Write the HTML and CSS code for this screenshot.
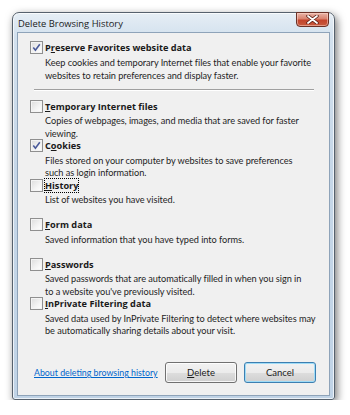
FILE: index.html
```html
<!DOCTYPE html>
<html lang="en">
<head>
    <meta charset="UTF-8">
    <meta name="viewport" content="width=device-width, initial-scale=1.0">
    <title>Delete Browsing History</title>
    <link rel="stylesheet" href="styles.css">
</head>
<body>
    <div class="window">
        <div class="titlebar">
            <span class="title">Delete Browsing History</span>
            <button class="close-btn" aria-label="Close">
                <svg width="13" height="9" viewBox="0 0 13 9">
                    <path d="M2 1 L11 8 M11 1 L2 8" stroke="#5a1d14" stroke-width="3.4" stroke-linecap="round"/>
                    <path d="M2 1 L11 8 M11 1 L2 8" stroke="#ffffff" stroke-width="1.8" stroke-linecap="round"/>
                </svg>
            </button>
        </div>

        <div class="client">
            <div class="option first">
                <label class="option-label"><span class="check checked"></span><span>P<u>r</u>eserve Favorites website data</span></label>
                <p class="desc">Keep cookies and temporary Internet files that enable your favorite<br>websites to retain preferences and display faster.</p>
            </div>

            <div class="separator"></div>

            <div class="option">
                <label class="option-label"><span class="check"></span><span><u>T</u>emporary Internet files</span></label>
                <p class="desc">Copies of webpages, images, and media that are saved for faster<br>viewing.</p>
            </div>

            <div class="option">
                <label class="option-label"><span class="check checked"></span><span>C<u>o</u>okies</span></label>
                <p class="desc">Files stored on your computer by websites to save preferences<br>such as login information.</p>
            </div>

            <div class="option">
                <label class="option-label"><span class="check"></span><span class="focus"><u>H</u>istory</span></label>
                <p class="desc">List of websites you have visited.</p>
            </div>

            <div class="option">
                <label class="option-label"><span class="check"></span><span><u>F</u>orm data</span></label>
                <p class="desc">Saved information that you have typed into forms.</p>
            </div>

            <div class="option">
                <label class="option-label"><span class="check"></span><span><u>P</u>asswords</span></label>
                <p class="desc">Saved passwords that are automatically filled in when you sign in<br>to a website you've previously visited.</p>
            </div>

            <div class="option">
                <label class="option-label"><span class="check"></span><span><u>I</u>nPrivate Filtering data</span></label>
                <p class="desc">Saved data used by InPrivate Filtering to detect where websites may<br>be automatically sharing details about your visit.</p>
            </div>

            <div class="footer">
                <a href="#" class="help-link">About deleting browsing history</a>
                <div class="buttons">
                    <button class="btn"><u>D</u>elete</button>
                    <button class="btn default">Cancel</button>
                </div>
            </div>
        </div>
    </div>
</body>
</html>
```

FILE: styles.css
```css
body {
    margin: 0;
    padding: 0;
    background-color: #ffffff;
    font-family: Lato, "Open Sans", sans-serif;
    font-size: 9.2px;
    color: #000000;
}

.window {
    box-sizing: border-box;
    width: 323px;
    height: 388px;
    margin: 12px 0 0 12px;
    padding: 0 4px 3px 4px;
    display: flex;
    flex-direction: column;
    border: 1px solid #56616d;
    border-radius: 7px 7px 3px 3px;
    background: linear-gradient(to bottom, #e6eef5 0%, #d3e1ee 6%, #c6d7e8 40%, #c0d3e6 100%);
    box-shadow: inset 0 0 0 1px rgba(255,255,255,0.7), 2px 3px 9px rgba(0,0,0,0.55);
}

.titlebar {
    height: 19px;
    display: flex;
    align-items: flex-start;
}

.title {
    margin: 4px 0 0 1px;
    font-family: "Open Sans", sans-serif;
    font-size: 9.4px;
    color: #1b1b1b;
}

.close-btn {
    margin-left: auto;
    margin-right: 1px;
    margin-top: -1px;
    width: 33px;
    height: 15px;
    padding: 0;
    display: flex;
    align-items: center;
    justify-content: center;
    border: 1px solid #6b3127;
    border-radius: 0 0 4px 4px;
    background: linear-gradient(to bottom, #e8b5a8 0%, #d9826f 45%, #c3442c 55%, #c85b3f 100%);
    box-shadow: inset 0 0 0 1px rgba(255,220,210,0.5);
}

.client {
    flex: 1;
    display: flex;
    flex-direction: column;
    padding: 7px 13px 12px 12px;
    border: 1px solid #8ea3b9;
    background-color: #f0f0f0;
}

.option {
    height: 39.5px;
}

.option.first {
    height: auto;
}

.option-label {
    display: flex;
    align-items: center;
    gap: 2px;
    height: 14px;
    font-family: "Open Sans", sans-serif;
    font-size: 9.2px;
    font-weight: bold;
    color: #1a1a1a;
}

.check {
    box-sizing: border-box;
    width: 13px;
    height: 13px;
    flex: none;
    border: 1px solid #8f8f8f;
    background: linear-gradient(135deg, #dcdcdc 0%, #f4f4f4 60%, #ffffff 100%);
    box-shadow: inset 0 0 0 1px #f4f4f4;
}

.check.checked {
    background-image:
        url("data:image/svg+xml;utf8,<svg xmlns='http://www.w3.org/2000/svg' width='11' height='11' viewBox='0 0 11 11'><path d='M2.3 5.6 L4.4 8.2 L8.8 2.2' fill='none' stroke='%234a5a9a' stroke-width='1.6'/></svg>"),
        linear-gradient(135deg, #dcdcdc 0%, #f4f4f4 60%, #ffffff 100%);
}

.focus {
    outline: 1px dotted #000000;
    outline-offset: 0;
}

.desc {
    margin: 2px 0 0 15px;
    line-height: 12.5px;
    letter-spacing: -0.05px;
    white-space: nowrap;
    color: #1e1e1e;
}

.option.first .desc {
    margin-top: 3px;
}

.separator {
    height: 1px;
    margin: 7px 2px 8px 4px;
    background-color: #a0a0a0;
    border-bottom: 1px solid #ffffff;
}

.footer {
    margin-top: auto;
    display: flex;
    align-items: center;
    padding-left: 4px;
}

.help-link {
    white-space: nowrap;
    font-size: 8.8px;
    color: #0066cc;
    text-decoration: underline;
}

.buttons {
    margin-left: auto;
    display: flex;
    gap: 7px;
}

.btn {
    box-sizing: border-box;
    width: 72px;
    height: 21px;
    padding: 0;
    font-family: inherit;
    font-size: 9.5px;
    color: #1a1a1a;
    border: 1px solid #707070;
    border-radius: 3px;
    background: linear-gradient(to bottom, #f2f2f2 0%, #ebebeb 50%, #dddddd 51%, #cfcfcf 100%);
    box-shadow: inset 0 0 0 1px rgba(255,255,255,0.8);
}

.btn.default {
    border-color: #3c7fb1;
    box-shadow: inset 0 0 0 1px #9fdcf7;
}
```
